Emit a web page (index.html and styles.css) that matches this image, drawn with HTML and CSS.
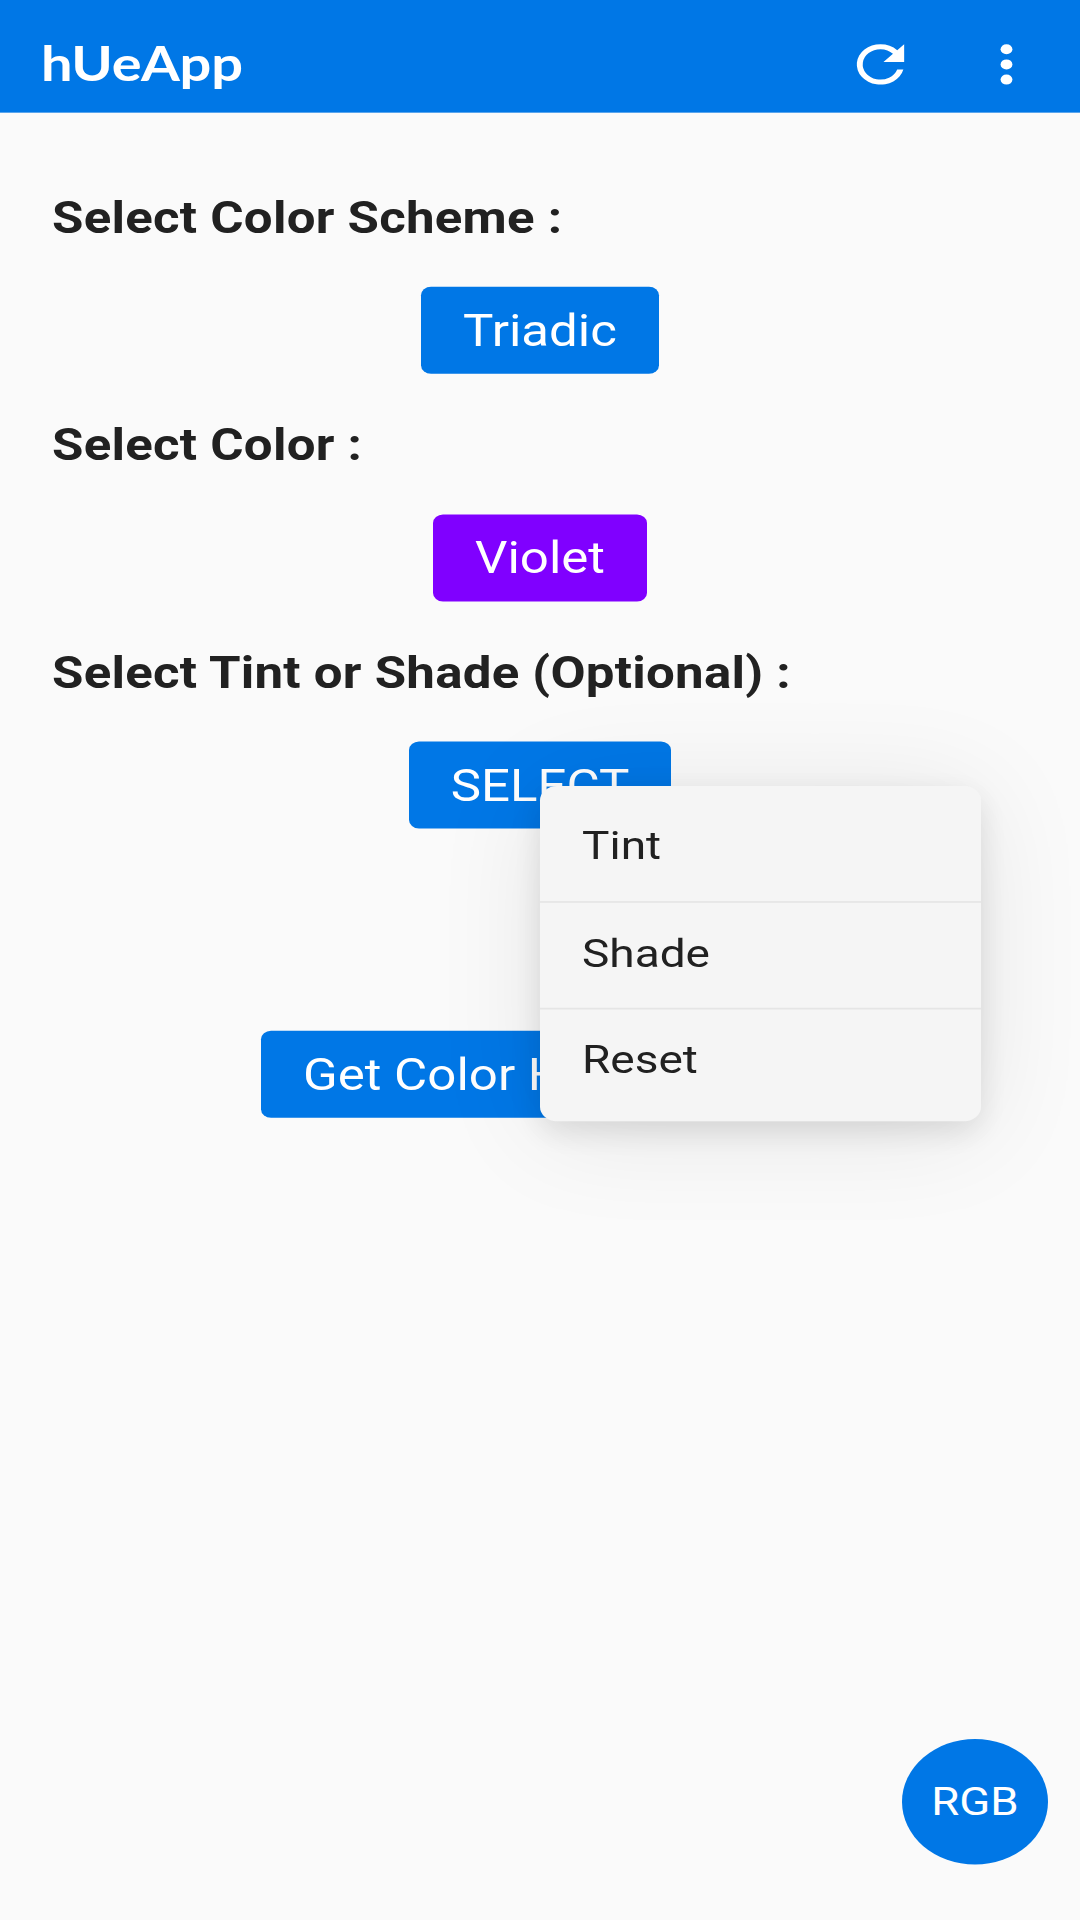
FILE: index.html
```html
<!DOCTYPE html>
<html lang="en">
<head>
<meta charset="utf-8">
<title>hUeApp</title>
<link rel="stylesheet" href="styles.css">
</head>
<body>
<div class="screen">
  <header class="toolbar">
    <h1 class="title">hUeApp</h1>
    <div class="actions">
      <svg class="icon" viewBox="0 0 24 24"><path d="M17.65 6.35A7.96 7.96 0 0 0 12 4a8 8 0 1 0 7.73 10h-2.08A6 6 0 1 1 12 6c1.66 0 3.14.69 4.22 1.78L13 11h7V4z"/></svg>
      <svg class="icon" viewBox="0 0 24 24"><circle cx="12" cy="6" r="2"/><circle cx="12" cy="12" r="2"/><circle cx="12" cy="18" r="2"/></svg>
    </div>
  </header>
  <main class="content">
    <h2 class="label">Select Color Scheme :</h2>
    <button class="button">Triadic</button>
    <h2 class="label">Select Color :</h2>
    <button class="button violet">Violet</button>
    <h2 class="label">Select Tint or Shade (Optional) :</h2>
    <button class="button select">SELECT</button>
    <button class="button harmony">Get Color Harmony</button>
  </main>
  <ul class="menu">
    <li class="item">Tint</li>
    <li class="item">Shade</li>
    <li class="item">Reset</li>
  </ul>
  <button class="fab">RGB</button>
</div>
</body>
</html>
```
FILE: styles.css
```css
* { box-sizing: border-box; margin: 0; padding: 0; }
html, body { width: 1080px; height: 1920px; overflow: hidden; background: #fafafa; }
.screen {
  position: relative;
  width: 1080px;
  height: 2250px;
  margin-bottom: -330px;
  transform: scaleY(0.85333);
  transform-origin: 0 0;
  font-family: Roboto, sans-serif;
  color: #212121;
}
.toolbar {
  display: flex;
  align-items: center;
  justify-content: space-between;
  height: 132px;
  padding: 18px 38px 0 41px;
  background: #0077e6;
  color: #fff;
}
.title { margin-top: -2px; font: 700 56px/66px Lato, sans-serif; letter-spacing: -.2px; }
.actions { display: flex; gap: 55px; }
.icon { width: 71px; height: 71px; fill: #fff; }
.content { display: flex; flex-direction: column; align-items: center; padding-top: 93.5px; }
.label {
  align-self: flex-start;
  margin-left: 52px;
  font-size: 51px;
  font-weight: 700;
  line-height: 60px;
  letter-spacing: .25px;
  white-space: nowrap;
}
.button {
  height: 102px;
  margin: 50.5px 0 54px;
  padding: 3px 42px 0;
  border: 0;
  border-radius: 10px;
  background: #0077e6;
  color: #fff;
  font: 400 51px/60px Roboto, sans-serif;
  white-space: nowrap;
}
.violet { background: #8000ff; }
.harmony { width: 558px; margin-top: 182.5px; text-align: left; }
.menu {
  position: absolute;
  left: 540px;
  top: 921px;
  width: 441px;
  height: 393px;
  padding: 10px 0;
  border-radius: 17px;
  background: #f5f5f5;
  box-shadow: 0 12px 34px rgba(0,0,0,.11), 0 10px 120px rgba(0,0,0,.09);
  list-style: none;
}
.item {
  height: 125px;
  padding: 32px 42px 0;
  font-size: 46px;
  line-height: 56px;
}
.item + .item { padding-top: 31px; border-top: 2px solid #e5e5e5; }
.fab {
  position: absolute;
  left: 902px;
  top: 2038px;
  width: 146px;
  height: 147px;
  padding-top: 1px;
  border: 0;
  border-radius: 50%;
  background: #0077e6;
  color: #fff;
  font: 400 45.5px/56px Roboto, sans-serif;
}
```
